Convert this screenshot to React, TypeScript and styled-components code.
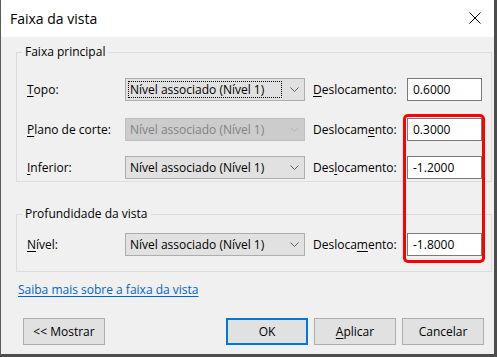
import React from "react";
import styled, { createGlobalStyle, css } from "styled-components";

const GlobalStyle = createGlobalStyle`
  html, body { margin: 0; padding: 0; background: #f0f0f0; }
  * { box-sizing: border-box; }
  body { font-family: "Open Sans", "Noto Sans", sans-serif; font-size: 12px; color: #000; }
`;

const Window = styled.div`
  position: relative;
  width: 497px;
  height: 357px;
  display: flex;
  flex-direction: column;
  background: #f0f0f0;
  border-left: 1px solid #5a5a5a;
  border-right: 3px solid #4d4d4d;
  border-bottom: 3px solid #4d4d4d;
`;

const TitleBar = styled.div`
  height: 37px;
  flex: none;
  background: #fff;
  display: flex;
  align-items: center;
  justify-content: space-between;
  padding-left: 9px;
`;

const Title = styled.span`
  font-size: 14px;
  color: #000;
  padding-bottom: 1px;
`;

const CloseButton = styled.div`
  width: 38px;
  height: 37px;
  display: flex;
  align-items: center;
  justify-content: center;
  padding-bottom: 2px;
`;

const Body = styled.div`
  flex: 1;
  display: flex;
  flex-direction: column;
  padding: 0 2px 0 15px;
`;

const Group = styled.fieldset<{ $mt: number; $pb: number }>`
  margin: ${(p) => p.$mt}px 0 0 0;
  padding: 0 9px ${(p) => p.$pb}px 10px;
  border: 1px solid #dcdcdc;
  min-inline-size: 0;
  display: flex;
  flex-direction: column;
`;

const Legend = styled.legend`
  margin-left: -5px;
  padding: 0 3px;
  line-height: 16px;
  height: 16px;
  color: #000;
`;

const FieldRow = styled.div<{ $mt: number }>`
  display: grid;
  grid-template-columns: 98px 180px 102px 75px;
  align-items: center;
  height: 23px;
  margin-top: ${(p) => p.$mt}px;
`;

const Label = styled.span<{ $indent?: boolean }>`
  white-space: nowrap;
  padding-left: ${(p) => (p.$indent ? 8 : 0)}px;
`;

const Key = styled.span`
  text-decoration: underline;
  text-underline-offset: 2px;
`;

const Combo = styled.div<{ $disabled?: boolean }>`
  height: 23px;
  display: flex;
  align-items: stretch;
  border: 1px solid ${(p) => (p.$disabled ? "#bfbfbf" : "#adadad")};
  background: ${(p) => (p.$disabled ? "#cccccc" : "#e1e1e1")};
  color: ${(p) => (p.$disabled ? "#838383" : "#000")};
`;

const ComboValue = styled.div<{ $focused?: boolean }>`
  flex: 1;
  margin: 2px 0 2px 2px;
  padding-left: 1px;
  display: flex;
  align-items: center;
  white-space: nowrap;
  overflow: hidden;
  border: 1px dotted transparent;
  ${(p) =>
    p.$focused &&
    css`
      border-color: #000;
    `}
`;

const ComboArrow = styled.div`
  width: 22px;
  display: flex;
  align-items: center;
  justify-content: center;
  padding-left: 2px;
`;

const TextInput = styled.div`
  height: 23px;
  border: 1px solid #7a7a7a;
  background: #fff;
  display: flex;
  align-items: center;
  padding-left: 5px;
`;

const HelpLink = styled.a`
  margin: 10px 0 0 2px;
  line-height: 16px;
  color: #0066cc;
  text-decoration: underline;
  text-underline-offset: 2px;
  align-self: flex-start;
  cursor: pointer;
`;

const ButtonBar = styled.div`
  margin-top: 20px;
  display: flex;
  align-items: center;
  padding: 0 8px 0 7px;
`;

const ButtonGroup = styled.div`
  margin-left: auto;
  display: flex;
  gap: 6px;
`;

const Button = styled.div<{ $primary?: boolean }>`
  width: 82px;
  height: 27px;
  display: flex;
  align-items: center;
  justify-content: center;
  background: #e1e1e1;
  border: ${(p) => (p.$primary ? "2px solid #0078d7" : "1px solid #adadad")};
`;

const Highlight = styled.div`
  position: absolute;
  left: 402px;
  top: 114px;
  width: 82px;
  height: 149px;
  border: 3px solid #ff0000;
  border-radius: 5px;
  pointer-events: none;
`;

const Chevron: React.FC<{ color: string }> = ({ color }) => (
  <svg width="9" height="5" viewBox="0 0 9 5">
    <polyline points="0.5,0.5 4.5,4.5 8.5,0.5" fill="none" stroke={color} strokeWidth="1" />
  </svg>
);

type RowProps = {
  mt: number;
  label: React.ReactNode;
  offset: React.ReactNode;
  value: string;
  disabled?: boolean;
  focused?: boolean;
};

const Row: React.FC<RowProps> = ({ mt, label, offset, value, disabled, focused }) => (
  <FieldRow $mt={mt}>
    <Label>{label}</Label>
    <Combo $disabled={disabled}>
      <ComboValue $focused={focused}>Nível associado (Nível 1)</ComboValue>
      <ComboArrow>
        <Chevron color={disabled ? "#b5b5b5" : "#606060"} />
      </ComboArrow>
    </Combo>
    <Label $indent>{offset}</Label>
    <TextInput>{value}</TextInput>
  </FieldRow>
);

export default function App() {
  return (
    <>
      <GlobalStyle />
      <Window>
        <TitleBar>
          <Title>Faixa da vista</Title>
          <CloseButton>
            <svg width="12" height="12" viewBox="0 0 12 12">
              <path d="M0.5 0.5 L11.5 11.5 M11.5 0.5 L0.5 11.5" stroke="#000" strokeWidth="1" />
            </svg>
          </CloseButton>
        </TitleBar>
        <Body>
          <Group $mt={7} $pb={2}>
            <Legend>Faixa principal</Legend>
            <Row
              mt={18}
              focused
              label={<><Key>T</Key>opo:</>}
              offset={<><Key>D</Key>eslocamento:</>}
              value="0.6000"
            />
            <Row
              mt={17}
              disabled
              label={<><Key>P</Key>lano de corte:</>}
              offset={<>Deslocam<Key>e</Key>nto:</>}
              value="0.3000"
            />
            <Row
              mt={15}
              label={<><Key>I</Key>nferior:</>}
              offset={<>Des<Key>l</Key>ocamento:</>}
              value="-1.2000"
            />
          </Group>
          <Group $mt={24} $pb={15}>
            <Legend>Profundidade da vista</Legend>
            <Row
              mt={11}
              label={<><Key>N</Key>ível:</>}
              offset={<>Desloca<Key>m</Key>ento:</>}
              value="-1.8000"
            />
          </Group>
          <HelpLink>Saiba mais sobre a faixa da vista</HelpLink>
          <ButtonBar>
            <Button>&lt;&lt; Mostrar</Button>
            <ButtonGroup>
              <Button $primary>OK</Button>
              <Button>
                <span>
                  <Key>A</Key>plicar
                </span>
              </Button>
              <Button>Cancelar</Button>
            </ButtonGroup>
          </ButtonBar>
        </Body>
        <Highlight />
      </Window>
    </>
  );
}
